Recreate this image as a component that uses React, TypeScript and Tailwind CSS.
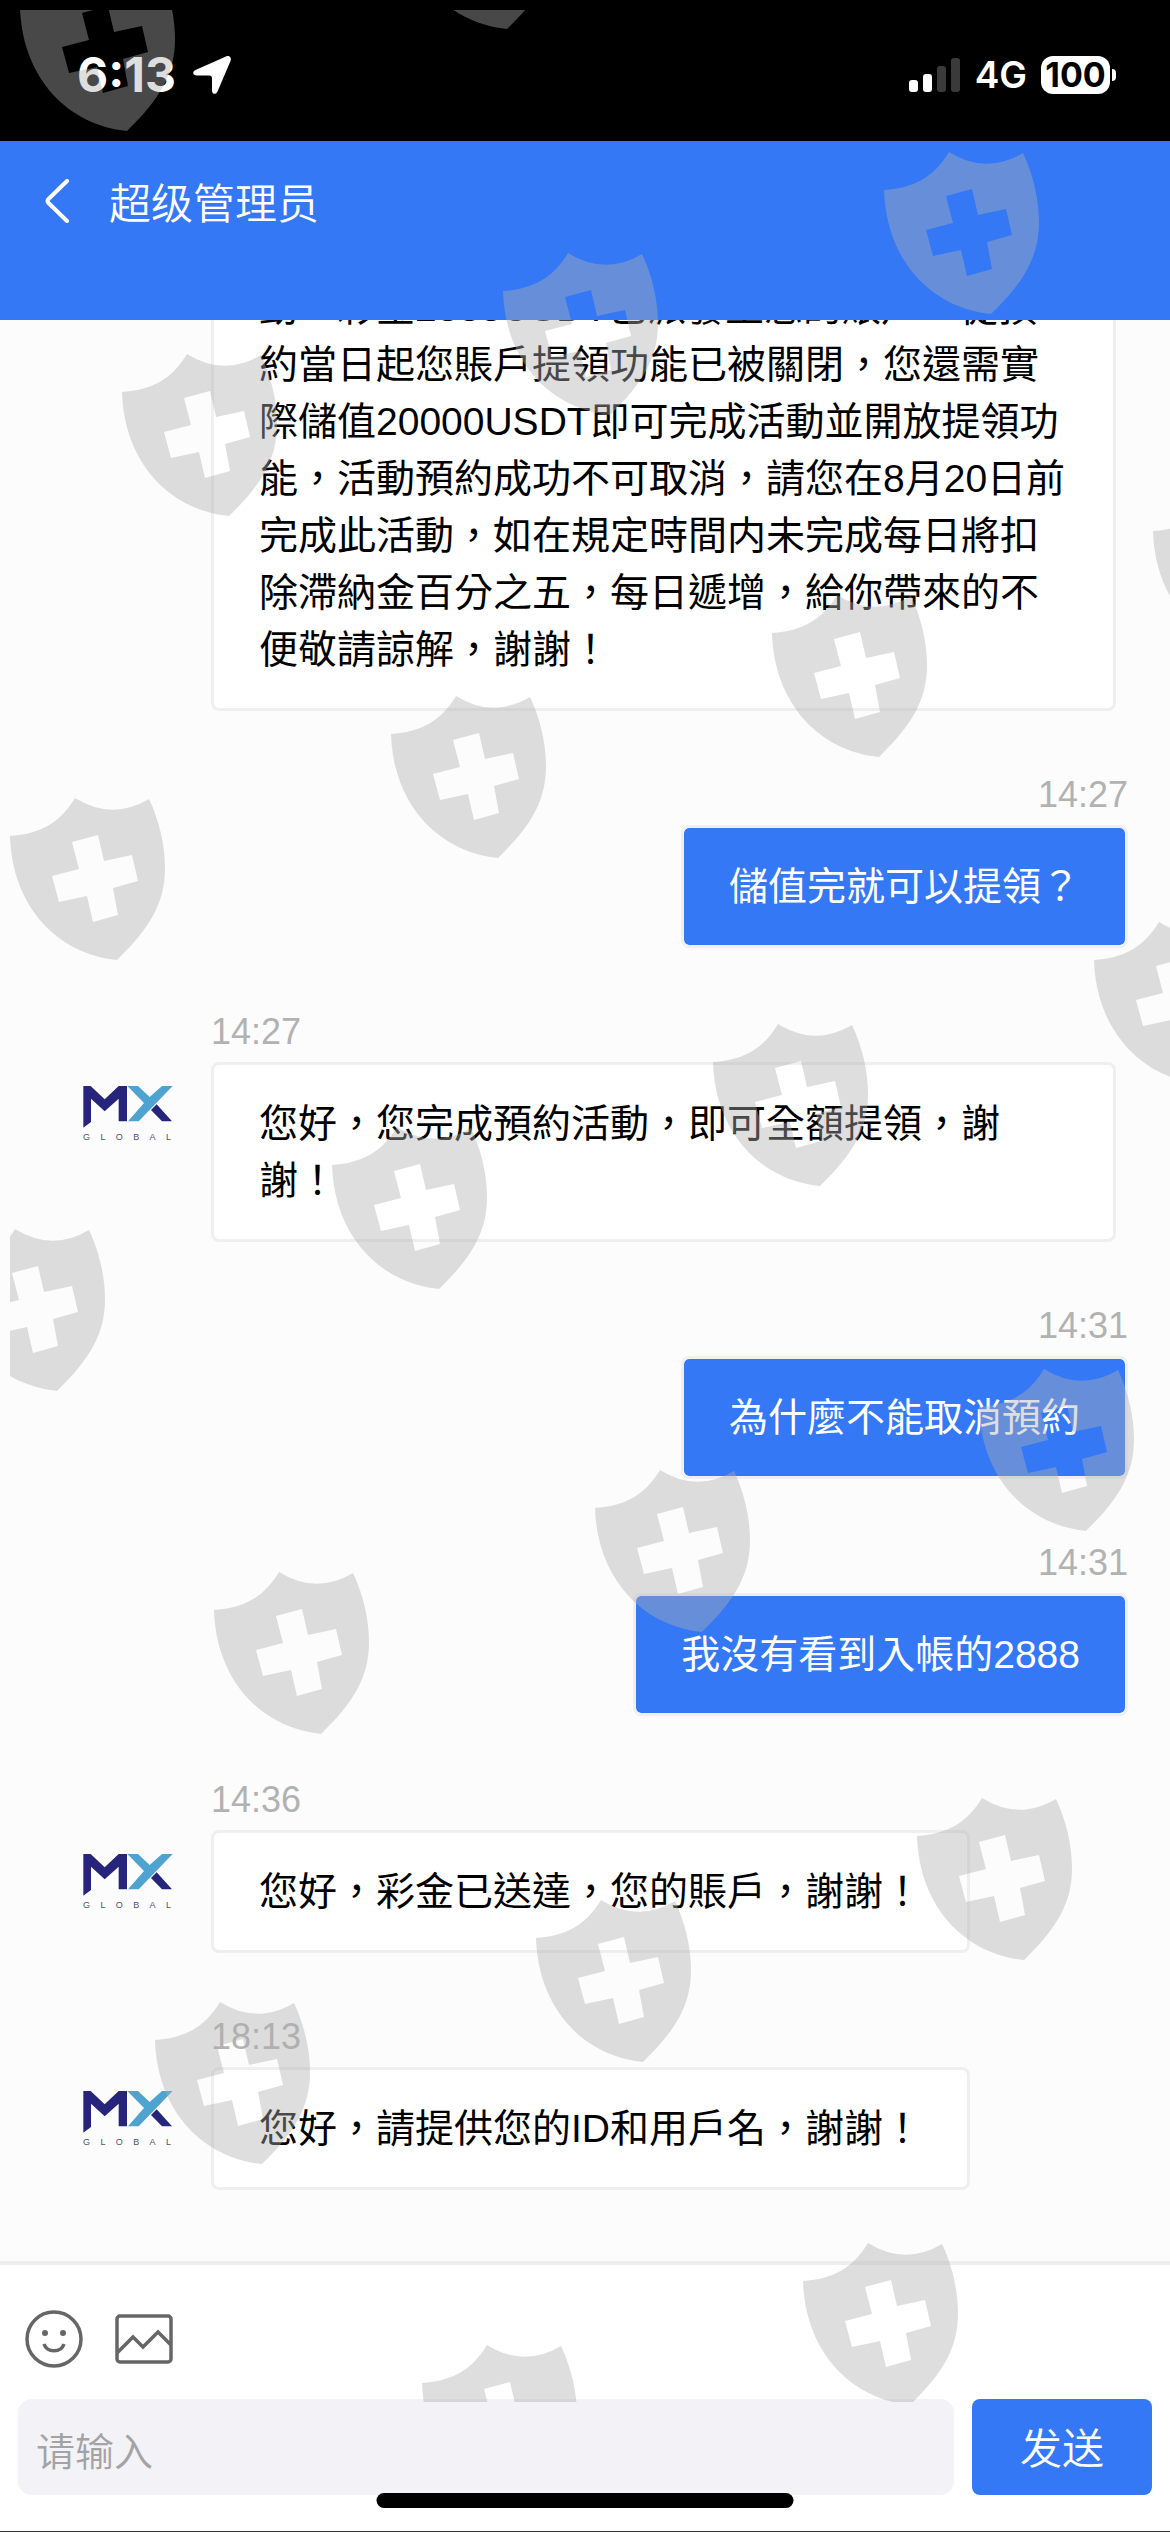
import React from "react";

type Message = { id: number; mine?: boolean; time?: string; text: string };

const messages: Message[] = [
  {
    id: 1,
    text: "動，彩金2888USDT已派發至您的賬戶，從預約當日起您賬戶提領功能已被關閉，您還需實際儲值20000USDT即可完成活動並開放提領功能，活動預約成功不可取消，請您在8月20日前完成此活動，如在規定時間内未完成每日將扣除滯納金百分之五，每日遞增，給你帶來的不便敬請諒解，謝謝！",
  },
  { id: 2, mine: true, time: "14:27", text: "儲值完就可以提領？" },
  { id: 3, time: "14:27", text: "您好，您完成預約活動，即可全額提領，謝謝！" },
  { id: 4, mine: true, time: "14:31", text: "為什麼不能取消預約" },
  { id: 5, mine: true, time: "14:31", text: "我沒有看到入帳的2888" },
  { id: 6, time: "14:36", text: "您好，彩金已送達，您的賬戶，謝謝！" },
  { id: 7, time: "18:13", text: "您好，請提供您的ID和用戶名，謝謝！" },
];

const shields: [number, number][] = [
  [20, -31], [400, -133], [884, 152], [503, 253], [122, 354], [1153, 493],
  [772, 595], [391, 696], [10, 798], [1094, 922], [713, 1024], [332, 1127],
  [-50, 1229], [979, 1369], [595, 1470], [214, 1572], [917, 1798], [536, 1900],
  [155, 2002], [803, 2243], [422, 2345],
];

function Watermark() {
  return (
    <div className="pointer-events-none absolute top-2.5 right-0 bottom-[130px] left-2.5 overflow-hidden" aria-hidden="true">
      <svg width="1170" height="2532" viewBox="10 10 1170 2532" className="max-w-none">
        {shields.map(([x, y]) => (
          <path
            key={`${x},${y}`}
            transform={`translate(${x} ${y})`}
            fill="#b0b0b0"
            fillOpacity="0.41"
            fillRule="evenodd"
            d="M0 38C30 36 50 25 65 0Q102 23 139 1C149 22 155 47 155 70C155 105 140 130 107 162C47 156 2 108 0 38ZM62 44L88 37L94 63L122 57L128 83L103 90L108 117L83 124L77 98L49 104L42 78L69 71Z"
          />
        ))}
      </svg>
    </div>
  );
}

function StatusBar() {
  return (
    <div className="flex h-[141px] shrink-0 items-center justify-between bg-black pt-2 pr-[54px] pl-[77px] font-['Inter',sans-serif] text-white">
      <div className="flex items-center gap-4">
        <span className="text-5xl leading-[56px] font-bold">6:13</span>
        <svg width="40" height="40" viewBox="0 0 40 40" fill="#fff" aria-hidden="true">
          <path d="M34 1.500C37 0 40 2.500 38.500 6L25.500 36.500C24 40 20 39.500 20 35.500V23C20 21.500 19 20.500 17.500 20.500H5C0.500 20.500 0 16.500 3.500 15Z" />
        </svg>
      </div>
      <div className="flex items-center">
        <svg width="52" height="36" viewBox="0 0 52 36" aria-label="信号">
          <rect x="0" y="23" width="9" height="12" rx="3" fill="#fff" />
          <rect x="14" y="17" width="9" height="18" rx="3" fill="#fff" />
          <rect x="28" y="9" width="9" height="26" rx="3" fill="#3a3a3a" />
          <rect x="42" y="1" width="9" height="34" rx="3" fill="#3a3a3a" />
        </svg>
        <span className="ml-3.5 text-[37px] leading-10 font-semibold">4G</span>
        <span className="ml-3.5 flex h-[38px] w-[69px] items-center justify-center rounded-xl bg-white text-[34px] leading-[38px] font-bold text-black">100</span>
        <span className="ml-0.5 h-3 w-1 rounded-r-full bg-white" />
      </div>
    </div>
  );
}

function Header() {
  return (
    <header className="flex h-[179px] shrink-0 items-start gap-10 bg-[#3478f6] pt-7 pl-[45px] text-white">
      <button type="button" aria-label="返回" className="flex h-16 w-6 items-center">
        <svg width="24" height="44" viewBox="0 0 24 44" fill="none" stroke="#fff" strokeWidth="4" strokeLinecap="round" strokeLinejoin="round">
          <path d="M22 2L3 20.500Q2 22 3 23.500L22 42" />
        </svg>
      </button>
      <h1 className="font-['Noto_Sans_CJK_SC',sans-serif] text-[42px] leading-[64px] font-[350]">超级管理员</h1>
    </header>
  );
}

function Avatar() {
  return (
    <div className="mt-[75px] flex w-[90px] shrink-0 flex-col gap-1" role="img" aria-label="MX GLOBAL">
      <svg width="90" height="42" viewBox="40 50 268 126" aria-hidden="true">
        <path fill="#26247b" d="M40 50H62L104 90L146 50H171V156H146V88L104 126L63 88V158L40 175Z" />
        <path fill="#4fa3d1" d="M172 50H204L239 83L276 50H308L206 156H174L222 101Z" />
        <path fill="#26247b" d="M243 122L260 105L306 156H276Z" />
      </svg>
      <div className="flex justify-between pr-0.5 font-['Liberation_Sans',sans-serif] text-[9px] leading-[10px] text-gray-600">
        {["G", "L", "O", "B", "A", "L"].map((letter, i) => (
          <span key={i}>{letter}</span>
        ))}
      </div>
    </div>
  );
}

function Bubble({ message }: { message: Message }) {
  const { mine, time, text } = message;
  if (mine) {
    return (
      <li className="flex flex-col items-end pr-[42px]">
        <time className="mb-[9px] text-4xl leading-[42px] text-[#b2b2b2]">{time}</time>
        <p className="rounded-lg border-[3px] border-[#f0f0f0] bg-[#3478f6] bg-clip-padding px-[45px] py-[30px] text-[39px] leading-[57px] text-white">{text}</p>
      </li>
    );
  }
  return (
    <li className="flex items-start pr-[54px] pl-[83px]">
      {time ? <Avatar /> : <div className="w-[90px] shrink-0" />}
      <div className="ml-[38px] flex min-w-0 flex-1 flex-col items-start">
        {time && <time className="mb-[9px] text-4xl leading-[42px] text-[#b2b2b2]">{time}</time>}
        <p className="max-w-full rounded-lg border-[3px] border-[#efefef] bg-white px-[45px] py-[30px] text-[39px] leading-[57px] break-words text-black">{text}</p>
      </div>
    </li>
  );
}

function Composer() {
  return (
    <form
      className="shrink-0 border-t-4 border-b border-t-[#eeeeee] border-b-[#333333] bg-white px-[18px] pt-[45px] pb-9 font-['Noto_Sans_CJK_SC',sans-serif]"
      onSubmit={(e) => e.preventDefault()}
    >
      <div className="mb-[31px] flex items-center gap-8 pl-[7px]">
        <button type="button" aria-label="表情">
          <svg width="58" height="58" viewBox="0 0 58 58" fill="none" stroke="#666" strokeWidth="3.500">
            <circle cx="29" cy="29" r="27" />
            <circle cx="20" cy="23" r="3" fill="#666" stroke="none" />
            <circle cx="38" cy="23" r="3" fill="#666" stroke="none" />
            <path d="M19 34C22 43 36 43 39 34" />
          </svg>
        </button>
        <button type="button" aria-label="图片">
          <svg width="58" height="50" viewBox="0 0 58 50" fill="none" stroke="#666" strokeWidth="3.500">
            <rect x="2" y="2" width="54" height="46" rx="3" />
            <path d="M2 39L18 23L28 33L43 18L56 31" />
          </svg>
        </button>
      </div>
      <div className="flex gap-[18px]">
        <input
          type="text"
          aria-label="请输入"
          placeholder="请输入"
          className="h-24 min-w-0 flex-1 rounded-[14px] bg-[#f2f2f7] px-[18px] pt-1 text-[39px] font-[350] text-black placeholder:text-[#a3a3a3] placeholder:opacity-100"
        />
        <button type="submit" className="h-24 w-[180px] rounded-lg bg-[#3478f6] pb-1 text-[42px] font-[350] text-white">
          发送
        </button>
      </div>
    </form>
  );
}

export default function App() {
  return (
    <div className="relative flex h-screen flex-col overflow-hidden bg-white font-['Liberation_Sans','Noto_Sans_CJK_TC',sans-serif]">
      <StatusBar />
      <Header />
      <main className="flex min-h-0 flex-1 flex-col-reverse overflow-y-auto bg-[#fcfcfc] [scrollbar-width:none]">
        <ul className="flex shrink-0 flex-col gap-[63px] pb-[71px]">
          {messages.map((m) => (
            <Bubble key={m.id} message={m} />
          ))}
        </ul>
      </main>
      <Composer />
      <Watermark />
      <div className="absolute bottom-6 left-1/2 h-[15px] w-[417px] -translate-x-1/2 rounded-full bg-black" />
    </div>
  );
}
